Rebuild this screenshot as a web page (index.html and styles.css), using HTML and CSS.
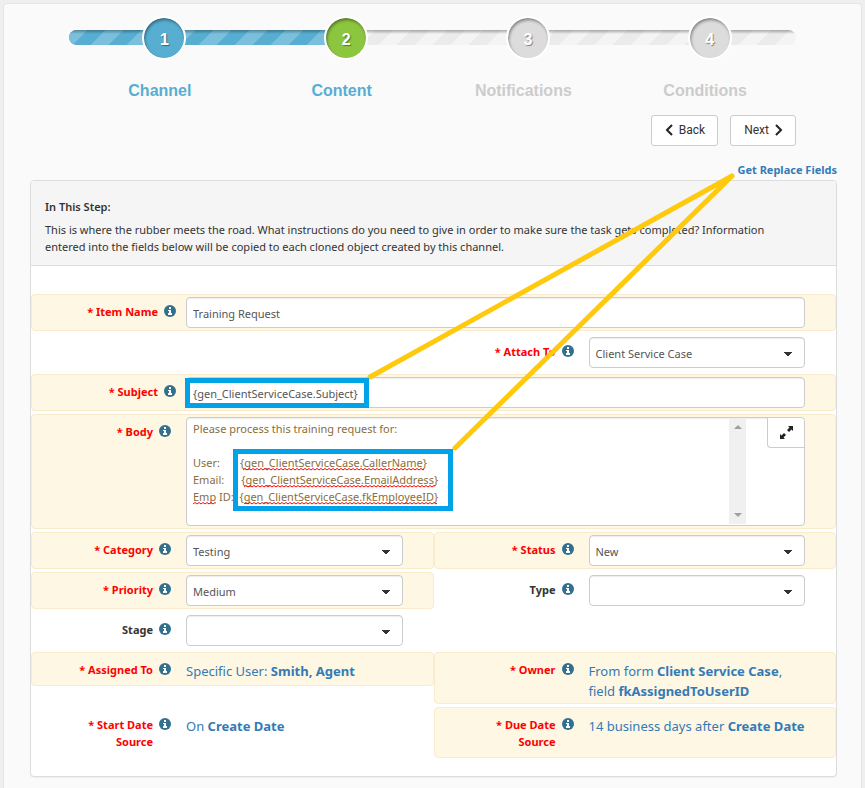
FILE: index.html
```html
<!DOCTYPE html>
<html lang="en">
  <head>
    <meta charset="UTF-8" />
    <meta name="viewport" content="width=device-width, initial-scale=1.0" />
    <title>Channel - Content</title>
    <link rel="stylesheet" href="styles.css">
  </head>

  <body>
    <!-- shared icons -->
    <svg class="sprite" aria-hidden="true">
      <symbol id="info" viewBox="0 0 12 12">
        <circle cx="6" cy="6" r="6" fill="#31708f" />
        <path d="M5 2h2v2H5zM4 5h3v3h1v2H4V8h1V6H4z" fill="#fff" />
      </symbol>
    </svg>

    <main class="panel">
      <div class="wizard">
        <div class="track"><div class="track-fill"></div></div>
        <ol class="steps">
          <li class="step done"><span class="circle">1</span><span class="step-name">Channel</span></li>
          <li class="step active"><span class="circle">2</span><span class="step-name">Content</span></li>
          <li class="step"><span class="circle">3</span><span class="step-name">Notifications</span></li>
          <li class="step"><span class="circle">4</span><span class="step-name">Conditions</span></li>
        </ol>
      </div>

      <div class="wizard-buttons">
        <button type="button" class="btn">
          <svg width="8" height="12" viewBox="0 0 8 12"><path d="M7 1L2 6l5 5" /></svg>
          Back
        </button>
        <button type="button" class="btn">
          Next
          <svg width="8" height="12" viewBox="0 0 8 12"><path d="M1 1l5 5-5 5" /></svg>
        </button>
      </div>

      <div class="replace-link"><a href="#">Get Replace Fields</a></div>

      <form class="card">
        <header class="card-header">
          <h2>In This Step:</h2>
          <p>This is where the rubber meets the road. What instructions do you need to give in order to make sure the task gets completed? Information entered into the fields below will be copied to each cloned object created by this channel.</p>
        </header>

        <div class="fields">
          <div class="field wide required">
            <div class="label"><label for="item-name">* Item Name</label><svg class="info"><use href="#info" /></svg></div>
            <input class="control" id="item-name" type="text" value="Training Request">
          </div>

          <div class="field right required plain">
            <div class="label"><label for="attach-to">* Attach To</label><svg class="info"><use href="#info" /></svg></div>
            <select class="control" id="attach-to"><option>Client Service Case</option></select>
          </div>

          <div class="field wide required">
            <div class="label"><label for="subject">* Subject</label><svg class="info"><use href="#info" /></svg></div>
            <input class="control" id="subject" type="text" value="{gen_ClientServiceCase.Subject}">
          </div>

          <div class="field full required">
            <div class="label"><label for="body">* Body</label><svg class="info"><use href="#info" /></svg></div>
            <div class="control editor">
              <textarea id="body" spellcheck="false">Please process this training request for:

User:       {gen_ClientServiceCase.CallerName}
Email:      {gen_ClientServiceCase.EmailAddress}
Emp ID:  {gen_ClientServiceCase.fkEmployeeID}</textarea>
              <div class="scroll"><i class="up"></i><i class="down"></i></div>
              <button type="button" class="expand" aria-label="Expand">
                <svg width="13" height="13" viewBox="0 0 13 13">
                  <path d="M8 0h5v5l-1.500-1.500L9 6 7 4l2.500-2.500zM5 13H0V8l1.500 1.500L4 7l2 2-2.500 2.500z" fill="#222" />
                </svg>
              </button>
            </div>
          </div>

          <div class="field required">
            <div class="label"><label for="category">* Category</label><svg class="info"><use href="#info" /></svg></div>
            <select class="control" id="category"><option>Testing</option></select>
          </div>
          <div class="field required">
            <div class="label"><label for="status">* Status</label><svg class="info"><use href="#info" /></svg></div>
            <select class="control" id="status"><option>New</option></select>
          </div>

          <div class="field required">
            <div class="label"><label for="priority">* Priority</label><svg class="info"><use href="#info" /></svg></div>
            <select class="control" id="priority"><option>Medium</option></select>
          </div>
          <div class="field">
            <div class="label"><label for="type">Type</label><svg class="info"><use href="#info" /></svg></div>
            <select class="control" id="type"><option></option></select>
          </div>

          <div class="field left">
            <div class="label"><label for="stage">Stage</label><svg class="info"><use href="#info" /></svg></div>
            <select class="control" id="stage"><option></option></select>
          </div>

          <div class="field required left">
            <div class="label"><span>* Assigned To</span><svg class="info"><use href="#info" /></svg></div>
            <a class="value" href="#">Specific User: <b>Smith, Agent</b></a>
          </div>
          <div class="field required">
            <div class="label"><span>* Owner</span><svg class="info"><use href="#info" /></svg></div>
            <a class="value" href="#">From form <b>Client Service Case</b>, field <b>fkAssignedToUserID</b></a>
          </div>

          <div class="field required plain">
            <div class="label"><span>* Start Date Source</span><svg class="info"><use href="#info" /></svg></div>
            <a class="value" href="#">On <b>Create Date</b></a>
          </div>
          <div class="field required date-field">
            <div class="label"><span>* Due Date Source</span><svg class="info"><use href="#info" /></svg></div>
            <a class="value" href="#">14 business days after <b>Create Date</b></a>
          </div>
        </div>
      </form>
    </main>

    <!-- callouts drawn over the form -->
    <svg class="callouts" width="865" height="788" viewBox="0 0 865 788" aria-hidden="true">
      <defs>
        <pattern id="squiggle" width="4" height="3" patternUnits="userSpaceOnUse">
          <path d="M0 2L2 .5L4 2" fill="none" stroke="#f00" />
        </pattern>
      </defs>
      <g fill="url(#squiggle)">
        <rect width="181" height="3" transform="translate(243 468)" />
        <rect width="191" height="3" transform="translate(244 485)" />
        <rect width="193" height="3" transform="translate(244 502)" />
        <rect width="23" height="3" transform="translate(193 502)" />
      </g>
      <g fill="none" stroke="#ffc90e" stroke-width="5" stroke-linecap="round">
        <path d="M370 377L732 176M455 448L732 176" />
      </g>
      <g fill="none" stroke="#00a2e8" stroke-width="5">
        <rect x="187.500" y="380.500" width="179" height="25" />
        <rect x="235.500" y="451.500" width="215" height="57" />
      </g>
    </svg>
  </body>
</html>
```
FILE: styles.css
```css
html {
  box-sizing: border-box;
  font-family: "Noto Sans", "Open Sans", sans-serif;
  font-size: 11px;
  line-height: 17px;
}

*,
*:before,
*:after {
  box-sizing: inherit;
}

body {
  margin: 0;
  min-height: 100vh;
  padding: 3px 3px 0;
  display: flex;
  position: relative;
  color: #333;
  background-color: #efefef;
}

a {
  color: #337ab7;
  text-decoration: none;
}

.sprite {
  position: absolute;
  width: 0;
  height: 0;
}

.panel {
  flex-grow: 1;
  padding: 0 24px 11px 26px;
  background-color: #fafafa;
  border: 1px solid #e5e5e5;
  border-bottom: 0;
  border-radius: 4px 4px 0 0;
}

/* step wizard */
.wizard {
  position: relative;
  margin: 12px 41px 0 39px;
}

/* the track runs behind the circles */
.track {
  position: absolute;
  top: 14px;
  left: 0;
  right: 0;
  height: 15px;
  border-radius: 8px;
  overflow: hidden;
  background-color: #ebebeb;
  background-image: linear-gradient(rgba(0, 0, 0, 0.3), transparent 4px), linear-gradient(135deg, #f4f4f4 25%, transparent 25%, transparent 50%, #f4f4f4 50%, #f4f4f4 75%, transparent 75%);
  background-size: auto, 36px 36px;
}

.track-fill {
  width: 38%;
  height: 15px;
  background-color: #57aed1;
  background-image: linear-gradient(rgba(0, 0, 0, 0.3), transparent 4px), linear-gradient(135deg, #7abfdb 25%, transparent 25%, transparent 50%, #7abfdb 50%, #7abfdb 75%, transparent 75%);
  background-size: auto, 36px 36px;
}

.steps {
  display: flex;
  position: relative;
  list-style: none;
  margin: 0;
  padding: 0;
}

.step {
  flex: 1;
  display: flex;
  flex-direction: column;
  align-items: center;
  gap: 21px;
  color: #ccc;
  font: bold 16px/20px "Liberation Sans", Arial, sans-serif;
}

.circle {
  width: 44px;
  height: 44px;
  margin-left: 9px;
  border: 2px solid #fff;
  border-radius: 50%;
  color: #fff;
  background-color: #dcdcdc;
  background-clip: padding-box;
  box-shadow: inset 1px 2px 3px rgba(0, 0, 0, 0.4);
  line-height: 43px;
  text-align: center;
  text-shadow: 1px 1px 1px rgba(0, 0, 0, 0.4);
}

.done .circle {
  background-color: #57aed1;
}

.active .circle {
  background-color: #8cc63f;
}

.done .step-name,
.active .step-name {
  color: #57aed1;
}

/* buttons */
.wizard-buttons {
  display: flex;
  justify-content: flex-end;
  gap: 12px;
  margin: 14px 41px 0 0;
}

.btn {
  display: flex;
  align-items: center;
  gap: 6px;
  height: 31px;
  padding: 0 12px 1px 13px;
  border: 1px solid #ccc;
  border-radius: 3px;
  color: #333;
  background-color: #fff;
  font: 12px Roboto, sans-serif;
}

.btn path {
  fill: none;
  stroke: #222;
  stroke-width: 2;
}

.replace-link {
  margin: 15px 0 2px;
  text-align: right;
  font-weight: bold;
}

/* card */
.card {
  background-color: #fff;
  border: 1px solid #ddd;
  border-radius: 4px;
  box-shadow: 0 1px 1px rgba(0, 0, 0, 0.05);
}

.card-header {
  padding: 17px 40px 10px 14px;
  background-color: #f5f5f5;
  border-bottom: 1px solid #ddd;
  border-radius: 3px 3px 0 0;
}

.card-header h2 {
  margin: 0 0 6px;
  font-size: 11px;
  font-weight: 600;
}

.card-header p {
  margin: 0;
}

.fields {
  display: grid;
  grid-template-columns: 1fr 1fr;
  align-items: start;
  row-gap: 3px;
  padding: 28px 0 18px;
}

.field {
  display: grid;
  grid-template-columns: 139px minmax(0, 1fr);
  column-gap: 15px;
  padding: 2px 30px 2px 0;
  border: 1px solid transparent;
  border-radius: 4px;
}

.field.required {
  background-color: #fdf7e3;
  border-color: #faebcc;
}

.field.plain {
  background-color: transparent;
  border-color: transparent;
}

.wide,
.full {
  grid-column: 1 / 3;
}

.wide {
  grid-template-columns: 144px minmax(0, 1fr);
  column-gap: 10px;
}

.left {
  grid-column: 1;
}

.right {
  grid-column: 2;
}

.label {
  display: flex;
  justify-content: flex-end;
  gap: 6px;
  padding-top: 6px;
  text-align: right;
  font-weight: bold;
}

.label span {
  max-width: 80px;
}

.required .label {
  color: #f00;
}

.info {
  flex: none;
  width: 12px;
  height: 12px;
  margin-top: 2px;
}

.control {
  width: 100%;
  height: 31px;
  padding: 2px 6px 0;
  border: 1px solid #ccc;
  border-radius: 4px;
  color: #555;
  background-color: #fff;
  box-shadow: inset 0 1px 1px rgba(0, 0, 0, 0.075);
  font: inherit;
}

/* the caret is four stacked lines, each shorter than the last */
select.control {
  appearance: none;
  background-image: linear-gradient(#333, #333), linear-gradient(#333, #333), linear-gradient(#333, #333), linear-gradient(#333, #333);
  background-position: right 12px top 14px, right 13px top 15px, right 14px top 16px, right 15px top 17px;
  background-size: 8px 1px, 6px 1px, 4px 1px, 2px 1px;
  background-repeat: no-repeat;
}

/* body editor */
.editor {
  display: flex;
  align-items: flex-start;
  height: 109px;
  padding: 0;
}

.editor textarea {
  flex: 1;
  height: 106px;
  padding: 2px 6px;
  border: 0;
  resize: none;
  overflow: hidden;
  color: #8a6d3b;
  background: none;
  font: inherit;
}

.scroll {
  display: flex;
  flex-direction: column;
  justify-content: space-between;
  align-items: center;
  width: 17px;
  height: 106px;
  padding: 7px 0;
  background-color: #f0f0f0;
}

.up,
.down {
  border: 4px solid transparent;
}

.up {
  border-top: 0;
  border-bottom-color: #a0a0a0;
}

.down {
  border-bottom: 0;
  border-top-color: #a0a0a0;
}

.expand {
  display: flex;
  align-items: center;
  justify-content: center;
  width: 37px;
  height: 30px;
  margin-left: 21px;
  padding: 0;
  border: solid #ccc;
  border-width: 0 0 1px 1px;
  border-radius: 0 4px 0 4px;
  background-color: #fff;
}

/* text values */
.value {
  min-height: 28px;
  margin-right: -4px;
  padding-top: 6px;
  font-size: 13px;
  line-height: 20px;
}

.date-field {
  padding-bottom: 7px;
}

.callouts {
  position: absolute;
  top: 0;
  left: 0;
  pointer-events: none;
}
```
